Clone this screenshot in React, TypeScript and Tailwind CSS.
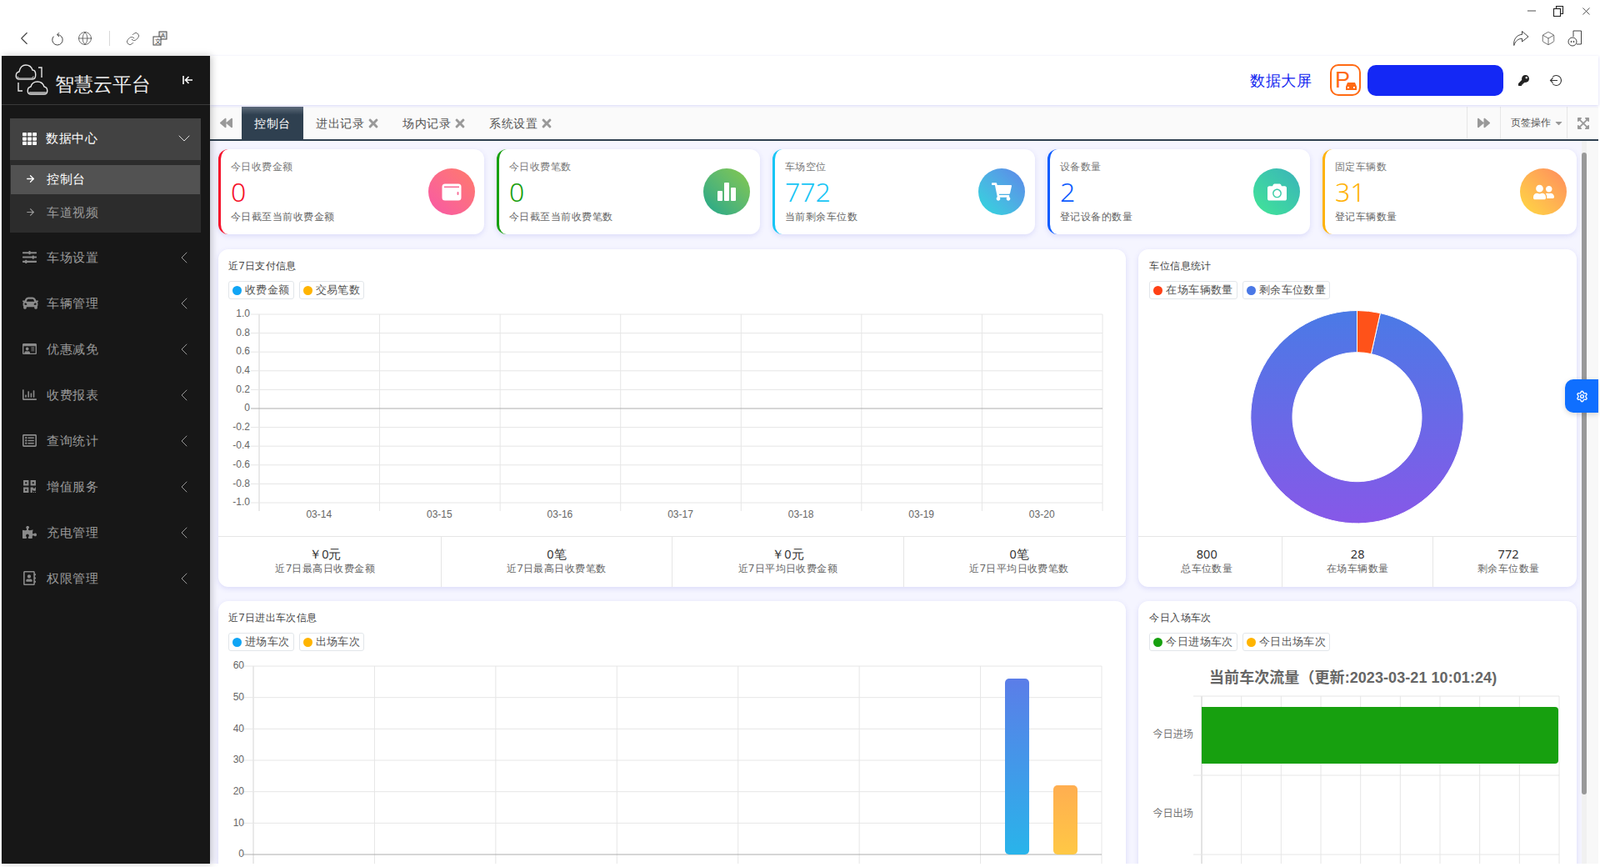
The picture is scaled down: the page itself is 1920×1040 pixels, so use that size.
import React from "react";
import { ChevronLeft, ChevronDown, ArrowRight, Globe, Link as LinkIcon, Box, Minus, X, Settings } from "lucide-react";
import {
  FaTh, FaSlidersH, FaCar, FaRegIdCard, FaRegChartBar, FaRegListAlt, FaQrcode, FaPuzzlePiece, FaRegAddressBook,
  FaBackward, FaForward, FaTimes, FaCaretDown, FaExpandArrowsAlt, FaKey, FaShoppingCart, FaCamera, FaUserFriends,
} from "react-icons/fa";

const menu = [
  { t: "车场设置", I: FaSlidersH },
  { t: "车辆管理", I: FaCar },
  { t: "优惠减免", I: FaRegIdCard },
  { t: "收费报表", I: FaRegChartBar },
  { t: "查询统计", I: FaRegListAlt },
  { t: "增值服务", I: FaQrcode },
  { t: "充电管理", I: FaPuzzlePiece },
  { t: "权限管理", I: FaRegAddressBook },
];

function Wallet() {
  return (
    <svg width="24" height="21" viewBox="0 0 24 21">
      <rect x="0.5" y="0.5" width="23" height="20" rx="3.5" fill="#fff" />
      <rect x="3" y="3.5" width="18" height="1.6" fill="#f8709a" />
      <rect x="18.5" y="10" width="2" height="4" rx="1" fill="#f8709a" />
    </svg>
  );
}
function Bars() {
  return (
    <svg width="24" height="24" viewBox="0 0 24 24" fill="#fff">
      <rect x="1" y="11" width="6" height="12" rx="1" />
      <rect x="9" y="1" width="6" height="22" rx="1" />
      <rect x="17" y="7" width="6" height="16" rx="1" />
    </svg>
  );
}

const cards = [
  { w: "w-[319px] pr-[11px]", title: "今日收费金额", v: "0", sub: "今日截至当前收费金额", b: "border-[#f5112a]", c: "text-[#f5112a]", g: "from-[#f857a6] to-[#ff7a68]", icon: <Wallet /> },
  { w: "w-[316px] pr-[12px]", title: "今日收费笔数", v: "0", sub: "今日截至当前收费笔数", b: "border-[#17a00e]", c: "text-[#17a00e]", g: "from-[#11a78a] to-[#85c849]", icon: <Bars /> },
  { w: "w-[315px] pr-[12px]", title: "车场空位", v: "772", sub: "当前剩余车位数", b: "border-[#17c5f5]", c: "text-[#17c5f5]", g: "from-[#29d9dc] to-[#5c84e8]", icon: <FaShoppingCart size={24} color="#fff" /> },
  { w: "w-[315px] pr-[12px]", title: "设备数量", v: "2", sub: "登记设备的数量", b: "border-[#0d5cff]", c: "text-[#0d5cff]", g: "from-[#42e695] to-[#3bb2b8]", icon: <FaCamera size={23} color="#fff" /> },
  { w: "w-[305px] pr-[12px]", title: "固定车辆数", v: "31", sub: "登记车辆数量", b: "border-[#ffb207]", c: "text-[#ffb207]", g: "from-[#ffd93f] to-[#ff8a5c]", icon: <FaUserFriends size={25} color="#fff" /> },
];

const chartFont = "'Liberation Sans','Noto Sans CJK SC',sans-serif";
const range = (n: number) => Array.from({ length: n }, (_, i) => i);

function PayChart() {
  const L = 49, R = 1061, T = 18, B = 244, colW = (R - L) / 7, rowH = (B - T) / 10;
  const labels = ["1.0", "0.8", "0.6", "0.4", "0.2", "0", "-0.2", "-0.4", "-0.6", "-0.8", "-1.0"];
  const dates = ["03-14", "03-15", "03-16", "03-17", "03-18", "03-19", "03-20"];
  return (
    <svg width="1090" height="284" className="block" style={{ fontFamily: chartFont }}>
      {range(8).map((i) => (
        <line key={i} x1={L + i * colW} x2={L + i * colW} y1={T} y2={B + 10} stroke={i === 0 ? "#d4d4d4" : "#e6e6e6"} />
      ))}
      {labels.map((l, i) => (
        <g key={l}>
          <line x1={L - 10} x2={R} y1={T + i * rowH} y2={T + i * rowH} stroke={l === "0" ? "#adadad" : "#e6e6e6"} />
          <text x={38} y={T + i * rowH} textAnchor="end" fontSize="12" fill="#666" dominantBaseline="middle">{l}</text>
        </g>
      ))}
      {dates.map((d, i) => (
        <text key={d} x={L + (i + 0.5) * colW - 0.5} y={262} textAnchor="middle" fontSize="12" fill="#666">{d}</text>
      ))}
    </svg>
  );
}

function TrafficChart() {
  const L = 42, R = 1060, T = 18, B = 244, colW = (R - L) / 7, rowH = (B - T) / 6;
  return (
    <svg width="1090" height="258" className="block" style={{ fontFamily: chartFont }}>
      <defs>
        <linearGradient id="bb" x1="0" y1="0" x2="0" y2="1">
          <stop offset="0" stopColor="#5b7de8" />
          <stop offset="1" stopColor="#29b4ea" />
        </linearGradient>
        <linearGradient id="yb" x1="0" y1="0" x2="0" y2="1">
          <stop offset="0" stopColor="#ffae50" />
          <stop offset="1" stopColor="#ffc845" />
        </linearGradient>
      </defs>
      {range(8).map((i) => (
        <line key={i} x1={L + i * colW} x2={L + i * colW} y1={T} y2={258} stroke={i === 0 ? "#d4d4d4" : "#e6e6e6"} />
      ))}
      {range(7).map((i) => (
        <g key={i}>
          <line x1={L - 12} x2={R} y1={T + i * rowH} y2={T + i * rowH} stroke={i === 6 ? "#adadad" : "#e6e6e6"} />
          <text x={31} y={T + i * rowH} textAnchor="end" fontSize="12" fill="#666" dominantBaseline="middle">{(6 - i) * 10}</text>
        </g>
      ))}
      <rect x="944" y="33" width="29" height="211" rx="5" fill="url(#bb)" />
      <rect x="1002" y="161" width="29" height="83" rx="5" fill="url(#yb)" />
    </svg>
  );
}

function Donut() {
  const cx = 262.5, cy = 141.2, r = 127.7, ri = 77.5;
  const a = (12.6 * Math.PI) / 180;
  const pt = (rad: number, an: number) => `${cx + rad * Math.sin(an)} ${cy - rad * Math.cos(an)}`;
  const sector = (a0: number, a1: number, large: number) =>
    `M${pt(r, a0)}A${r} ${r} 0 ${large} 1 ${pt(r, a1)}L${pt(ri, a1)}A${ri} ${ri} 0 ${large} 0 ${pt(ri, a0)}Z`;
  return (
    <svg width="526" height="284" className="block">
      <defs>
        <linearGradient id="dg" gradientUnits="userSpaceOnUse" x1="0" y1={cy - r} x2="0" y2={cy + r}>
          <stop offset="0" stopColor="#4a7ae6" />
          <stop offset="1" stopColor="#8758e8" />
        </linearGradient>
      </defs>
      <path d={sector(a, Math.PI * 2, 1)} fill="url(#dg)" stroke="#fff" strokeWidth="1" />
      <path d={sector(0, a, 0)} fill="#ff5219" stroke="#fff" strokeWidth="1" />
    </svg>
  );
}

function FlowChart() {
  const L = 76, R = 505, colW = (R - L) / 9;
  return (
    <svg width="526" height="258" className="block" style={{ fontFamily: chartFont }}>
      <text x="85" y="38" fontSize="18" fontWeight="700" fill="#666" letterSpacing="0.07">当前车次流量（更新:2023-03-21 10:01:24)</text>
      {range(10).map((i) => (
        <line key={i} x1={L + i * colW} x2={L + i * colW} y1={54} y2={258} stroke={i === 0 ? "#c8c8c8" : "#e6e6e6"} />
      ))}
      {[54, 149, 244].map((y) => (
        <line key={y} x1={L - 10} x2={R} y1={y} y2={y} stroke="#e6e6e6" />
      ))}
      <path d="M76 67H500a4 4 0 0 1 4 4V131a4 4 0 0 1-4 4H76Z" fill="#17a00f" />
      <text x="66" y="101" textAnchor="end" fontSize="12.2" fill="#777" dominantBaseline="middle">今日进场</text>
      <text x="66" y="196" textAnchor="end" fontSize="12.2" fill="#777" dominantBaseline="middle">今日出场</text>
    </svg>
  );
}

function Legend({ items }: { items: { t: string; c: string }[] }) {
  return (
    <div className="flex gap-[6px] mt-[8px] h-[22px]">
      {items.map((it) => (
        <div key={it.t} className="flex items-center h-[22px] px-[4px] gap-[4px] border border-[#e2e6ea] rounded-[3px] text-[13px] tracking-[0.4px] text-[#555] whitespace-nowrap">
          <span className={`w-[11px] h-[11px] rounded-full ${it.c}`} />
          {it.t}
        </div>
      ))}
    </div>
  );
}

function Stats({ items, mx }: { items: { v: string; t: string }[]; mx: string }) {
  return (
    <div className={`flex border-t border-[#e6e6e6] h-[61px] ${mx}`}>
      {items.map((it, i) => (
        <div key={it.t} className={`flex-1 ${i ? "border-l border-[#e6e6e6]" : ""} text-center pt-[11px]`}>
          <div className="text-[14.5px] leading-[18px] text-[#333]">{it.v}</div>
          <div className="text-[12.4px] tracking-[0.45px] leading-[18px] text-[#666]">{it.t}</div>
        </div>
      ))}
    </div>
  );
}

function LogoCloud() {
  return (
    <svg width="42" height="42" viewBox="0 0 42 42" fill="none" stroke="#e6e6e6" strokeWidth="1.4">
      <path d="M6 20c-5 0-5-8 0-9 1-5 4-8 8-8s7 3 8 6c5 0 5 11 0 11Z" />
      <path d="M4 16.5c0 2 1 2.5 3 2.5h13c2 0 3-.5 3-2.5" stroke="#9a9a9a" />
      <path d="M29 6h4v12" />
      <path d="M5 24v10h5" />
      <path d="M20 38c-5 0-5-8 0-9 1-4 4-6 8-6s7 3 8 6c5 1 5 9 0 9Z" />
      <path d="M18 36h21" stroke="#9a9a9a" strokeWidth="2" />
    </svg>
  );
}

function ChromeBar() {
  const ic = "#444";
  return (
    <div className="h-[67px] flex pl-[16px] pr-[8px]">
      <div className="flex items-center h-[67px] pt-[25px]">
        <ChevronLeft size={26} strokeWidth={1} color={ic} />
        <svg width="16" height="17" viewBox="0 0 16 17" fill="none" stroke={ic} strokeWidth="1" className="ml-[19px]">
          <path d="M8 3.6A6.2 6.2 0 1 1 3.4 5.6" />
          <path d="M10 1.2 7.6 3.6 10 6" />
        </svg>
        <Globe size={18} strokeWidth={1} color={ic} className="ml-[16px]" />
        <span className="w-px h-[18px] bg-[#d8d8d8] ml-[20px]" />
        <LinkIcon size={17} strokeWidth={1.1} color={ic} className="ml-[19px]" />
        <svg width="18" height="18" viewBox="0 0 18 18" className="ml-[15px]" fill="none" stroke={ic} strokeWidth="1" style={{ fontFamily: chartFont }}>
          <rect x="8" y="1" width="9" height="9" fill="#e8e8e8" />
          <rect x="1" y="7" width="9" height="10" fill="#fff" />
          <text x="10.2" y="8.4" fontSize="7" fill={ic} stroke="none">A</text>
          <text x="3" y="15" fontSize="7" fill={ic} stroke="none">文</text>
        </svg>
      </div>
      <div className="ml-auto flex flex-col items-end">
        <div className="flex items-center h-[26px] gap-[17px] pr-[1px]">
          <Minus size={16} strokeWidth={1.2} color="#222" />
          <svg width="14" height="14" viewBox="0 0 14 14" fill="none" stroke="#222" strokeWidth="1.1">
            <rect x="1.5" y="4.5" width="8" height="9" />
            <path d="M4.5 4.5V1.5H12.5V10.5H9.5" />
          </svg>
          <X size={15} strokeWidth={1.2} color="#222" className="ml-[2px]" />
        </div>
        <div className="flex items-center h-[41px] gap-[14px] pb-[1px] mr-[13px]">
          <svg width="20" height="20" viewBox="0 0 20 20" fill="none" stroke={ic} strokeWidth="1" strokeLinejoin="round">
            <path d="M11.5 1.5 19 8l-7.5 6v-3.7C7 10.3 3.5 13 1.8 18.5.8 11.5 5 5.6 11.5 5.4Z" />
          </svg>
          <Box size={18} strokeWidth={1} color={ic} />
          <svg width="18" height="20" viewBox="0 0 18 20" fill="none" stroke={ic} strokeWidth="1">
            <path d="M7 1h9.5v16H11" />
            <path d="M7 1v7" />
            <circle cx="6" cy="14" r="5" />
            <circle cx="4.5" cy="14" r=".6" fill={ic} />
            <circle cx="7.5" cy="14" r=".6" fill={ic} />
          </svg>
        </div>
      </div>
    </div>
  );
}

function Sidebar() {
  return (
    <aside className="ml-[2px] w-[250px] shrink-0 bg-[#171717] shadow-[2px_0_8px_rgba(0,0,0,0.22)] z-10">
      <div className="h-[59px] border-b border-[#3a3a3a] flex items-center pl-[15px] pr-[20px]">
        <LogoCloud />
        <span className="ml-[7px] mt-[9px] text-[23px] text-[#eee] whitespace-nowrap">智慧云平台</span>
        <svg width="13" height="12" viewBox="0 0 13 12" className="ml-auto" fill="none" stroke="#fff" strokeWidth="1.6">
          <path d="M1 1v10M12 6H4M7.5 2 3.5 6l4 4" />
        </svg>
      </div>
      <div className="mt-[16px] ml-[10px] mr-[11px] bg-[#2c2c2c] h-[137px]">
        <div className="h-[50px] pb-[2px] bg-[#424242] flex items-center pl-[15px] pr-[8px] text-white text-[15.4px] tracking-[0.6px]">
          <FaTh size={17} />
          <span className="ml-[11px]">数据中心</span>
          <ChevronDown size={24} strokeWidth={1} className="ml-auto text-[#ddd]" />
        </div>
        <div className="mt-[6px] mx-[1px] h-[35px] pb-[2px] bg-[#525252] flex items-center pl-[17px] text-white text-[15.4px] tracking-[0.6px]">
          <ArrowRight size={13} strokeWidth={2.4} />
          <span className="ml-[13px]">控制台</span>
        </div>
        <div className="mx-[1px] h-[42px] pt-[1px] flex items-center pl-[17px] text-[#9a9a9a] text-[15.4px] tracking-[0.6px]">
          <ArrowRight size={13} strokeWidth={2} />
          <span className="ml-[13px]">车道视频</span>
        </div>
      </div>
      <nav className="mt-[3px]">
        {menu.map(({ t, I }) => (
          <div key={t} className="h-[55px] pb-[2px] flex items-center pl-[25px] pr-[19px] text-[#9a9a9a] text-[15.4px] tracking-[0.6px]">
            <span className="w-[29px] flex items-center text-[#8a8a8a]"><I size={t === "车辆管理" ? 19 : 17} /></span>
            <span>{t}</span>
            <ChevronLeft size={24} strokeWidth={1} className="ml-auto" />
          </div>
        ))}
      </nav>
    </aside>
  );
}

function Header() {
  return (
    <div className="h-[59px] mr-[2px] flex items-center justify-end pr-[44px] bg-white shadow-[0_1px_3px_rgba(90,90,220,0.25)] relative z-[1]">
      <span className="text-[18px] tracking-[0.4px] text-[#1428f0] mt-[-1px]">数据大屏</span>
      <svg width="37" height="38" viewBox="0 0 37 38" fill="none" className="ml-[22px] mt-[-1px]" style={{ fontFamily: chartFont }}>
        <rect x="1" y="1" width="35" height="36" rx="9" stroke="#ff6a13" strokeWidth="2" />
        <text x="6" y="28" fontSize="27" fill="#ff6a13">P</text>
        <path d="M19 31v-4l2-5h9l2 5v4Z" fill="#ff6a13" />
        <rect x="21" y="27" width="2" height="2" fill="#fff" />
        <rect x="28" y="27" width="2" height="2" fill="#fff" />
      </svg>
      <div className="w-[163px] h-[37px] rounded-[10px] bg-[#1428f5] ml-[8px] mt-[-1px]" />
      <FaKey size={13} color="#222" className="ml-[18px]" />
      <svg width="15" height="15" viewBox="0 0 15 15" fill="none" stroke="#333" strokeWidth="1.1" className="ml-[24px]">
        <path d="M4 3.5A6 6 0 1 1 4 11.5M10 7.5H1.5M4.5 4.5l-3 3 3 3" />
      </svg>
    </div>
  );
}

function TabBar() {
  const others = ["进出记录", "场内记录", "系统设置"];
  return (
    <div className="mt-[2px] mr-[2px] h-[41px] bg-[#fafafa] border-b-[2px] border-[#2f4050] flex text-[14.4px] tracking-[0.5px] text-[#555]">
      <div className="w-[38px] flex items-center justify-center text-[#999]"><FaBackward size={15} /></div>
      <div className="w-[74px] flex items-center justify-center text-white bg-linear-to-b from-[#5f6c7b] via-[#2f4050] via-25% to-[#2f4050]">控制台</div>
      {others.map((t) => (
        <div key={t} className="flex items-center pl-[15px] pr-[12px] gap-[3px] whitespace-nowrap">
          {t}
          <FaTimes size={16} color="#999" />
        </div>
      ))}
      <div className="ml-auto w-[40px] border-l border-[#e6e6e6] flex items-center justify-center text-[#999]"><FaForward size={15} /></div>
      <div className="w-[80px] border-l border-[#e6e6e6] flex items-center pl-[12px] gap-[3px] text-[12.2px] tracking-normal">
        页签操作 <FaCaretDown size={13} color="#999" />
      </div>
      <div className="w-[38px] border-l border-[#e6e6e6] flex items-center justify-center text-[#999]"><FaExpandArrowsAlt size={16} /></div>
    </div>
  );
}

function StatCard({ c }: { c: (typeof cards)[number] }) {
  return (
    <div className={`${c.w} h-[102px] bg-white rounded-[12px] border-l-[3px] ${c.b} shadow-[0_2px_6px_rgba(90,90,220,0.16)] flex items-center justify-between pl-[12px]`}>
      <div className="self-start pt-[12px]">
        <div className="text-[12.4px] tracking-[0.45px] leading-[18px] text-[#777]">{c.title}</div>
        <div className={`mt-[3px] text-[32px] leading-[36px] font-light ${c.c}`}>{c.v}</div>
        <div className="mt-[3px] text-[12.4px] tracking-[0.45px] leading-[18px] text-[#666]">{c.sub}</div>
      </div>
      <div className={`w-[56px] h-[56px] rounded-full bg-linear-to-tr ${c.g} flex items-center justify-center`}>{c.icon}</div>
    </div>
  );
}

function Panel({ w, title, legend, pad, children }: { w: string; title: string; pad: string; legend: { t: string; c: string }[]; children: React.ReactNode }) {
  return (
    <div className={`${w} bg-white rounded-[12px] shadow-[0_2px_6px_rgba(90,90,220,0.16)] overflow-hidden`}>
      <div className={`${pad} pt-[10px]`}>
        <div className="text-[12.3px] tracking-[0.4px] leading-[20px] text-[#444] -translate-y-[0.5px]">{title}</div>
        <Legend items={legend} />
      </div>
      {children}
    </div>
  );
}

export default function App() {
  return (
    <div className="w-[1920px] h-[1040px] pb-[4px] overflow-hidden bg-white flex flex-col font-['Noto_Sans_CJK_SC','Noto_Sans',sans-serif]">
      <ChromeBar />
      <div className="flex flex-1 min-h-0">
        <Sidebar />
        <main className="flex-1 min-w-0 flex flex-col relative">
          <Header />
          <TabBar />
          <div className="flex-1 min-h-0 mr-[2px] flex bg-[#f5f5ff] overflow-hidden">
            <div className="w-[1640px] shrink-0 pl-[10px] pt-[10px]">
              <div className="flex gap-[15px]">
                {cards.map((c) => <StatCard key={c.title} c={c} />)}
              </div>
              <div className="flex gap-[15px] mt-[18px]">
                <Panel w="w-[1090px]" pad="px-[12px]" title="近7日支付信息" legend={[{ t: "收费金额", c: "bg-[#10a5f5]" }, { t: "交易笔数", c: "bg-[#ffb400]" }]}>
                  <PayChart />
                  <Stats mx="-mx-[10px]" items={[
                    { v: "￥0元", t: "近7日最高日收费金额" },
                    { v: "0笔", t: "近7日最高日收费笔数" },
                    { v: "￥0元", t: "近7日平均日收费金额" },
                    { v: "0笔", t: "近7日平均日收费笔数" },
                  ]} />
                </Panel>
                <Panel w="w-[526px]" pad="px-[13px]" title="车位信息统计" legend={[{ t: "在场车辆数量", c: "bg-[#ff4015]" }, { t: "剩余车位数量", c: "bg-[#4a78e6]" }]}>
                  <Donut />
                  <Stats mx="-mx-[8px]" items={[
                    { v: "800", t: "总车位数量" },
                    { v: "28", t: "在场车辆数量" },
                    { v: "772", t: "剩余车位数量" },
                  ]} />
                </Panel>
              </div>
              <div className="flex gap-[15px] mt-[17px]">
                <Panel w="w-[1090px] h-[400px]" pad="px-[12px]" title="近7日进出车次信息" legend={[{ t: "进场车次", c: "bg-[#10a5f5]" }, { t: "出场车次", c: "bg-[#ffb400]" }]}>
                  <TrafficChart />
                </Panel>
                <Panel w="w-[526px] h-[400px]" pad="px-[13px]" title="今日入场车次" legend={[{ t: "今日进场车次", c: "bg-[#17a00f]" }, { t: "今日出场车次", c: "bg-[#ffb400]" }]}>
                  <FlowChart />
                </Panel>
              </div>
            </div>
            <div className="w-[6px] ml-[6px] shrink-0 bg-[#f1f1f1]">
              <div className="mt-[14px] h-[770px] bg-[#999] rounded-[3px]" />
            </div>
            <div className="flex-1 bg-[#f8f8f8]" />
          </div>
          <div className="absolute right-[2px] top-[388px] w-[40px] h-[40px] rounded-l-[10px] bg-[#0f6fff] flex items-center justify-center shadow-[0_2px_6px_rgba(0,0,0,0.15)] z-20">
            <Settings size={15} color="#fff" strokeWidth={2.2} />
          </div>
        </main>
      </div>
    </div>
  );
}
